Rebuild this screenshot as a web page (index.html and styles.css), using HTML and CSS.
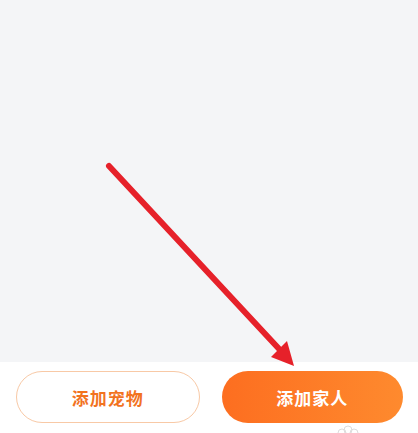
FILE: index.html
```html
<!DOCTYPE html>
<html lang="zh-CN">
  <head>
    <meta charset="UTF-8" />
    <title>添加家人</title>
    <link rel="stylesheet" href="styles.css">
  </head>
  <body>
    <div class="page">
      <div class="content"></div>

      <div class="bottom-bar">
        <button class="btn btn-outline">添加宠物</button>
        <button class="btn btn-primary">添加家人</button>
      </div>

      <!-- 标注箭头 -->
      <svg class="arrow" width="418" height="433" viewBox="0 0 418 433">
        <line x1="109" y1="166" x2="281" y2="351" stroke="#e6212a" stroke-width="6" stroke-linecap="round" />
        <polygon points="294,366 271,357 287,341" fill="#e6212a" />
      </svg>

      <!-- 水印 -->
      <svg class="watermark" width="30" height="14" viewBox="0 0 30 14">
        <circle cx="9" cy="10" r="4" fill="none" stroke="#dcdcdc" stroke-width="1" />
        <circle cx="15" cy="7" r="4" fill="none" stroke="#dcdcdc" stroke-width="1" />
        <circle cx="21" cy="10" r="4" fill="none" stroke="#dcdcdc" stroke-width="1" />
      </svg>
    </div>
  </body>
</html>
```

FILE: styles.css
```css
* {
  margin: 0;
  padding: 0;
  box-sizing: border-box;
}

body {
  font-family: "Noto Sans CJK SC", "Noto Sans", sans-serif;
  background: #ffffff;
  width: 418px;
  height: 433px;
  overflow: hidden;
}

.page {
  position: relative;
  display: flex;
  flex-direction: column;
  height: 433px;
}

.content {
  height: 362px;
  background: #f4f5f7;
}

.bottom-bar {
  display: flex;
  gap: 22px;
  padding: 9px 15px 0 16px;
  background: #ffffff;
}

.btn {
  flex: 1;
  height: 52px;
  border-radius: 26px;
  font-family: inherit;
  font-size: 17px;
  font-weight: 700;
  letter-spacing: 1px;
  cursor: pointer;
}

.btn-outline {
  background: #ffffff;
  color: #f2731f;
  border: 1px solid #f8c9a6;
}

.btn-primary {
  background: linear-gradient(to right, #fd6e20, #fe8a2e);
  color: #ffffff;
  border: none;
}

.arrow {
  position: absolute;
  top: 0;
  left: 0;
  pointer-events: none;
}

.watermark {
  position: absolute;
  left: 333px;
  top: 423px;
}
```
